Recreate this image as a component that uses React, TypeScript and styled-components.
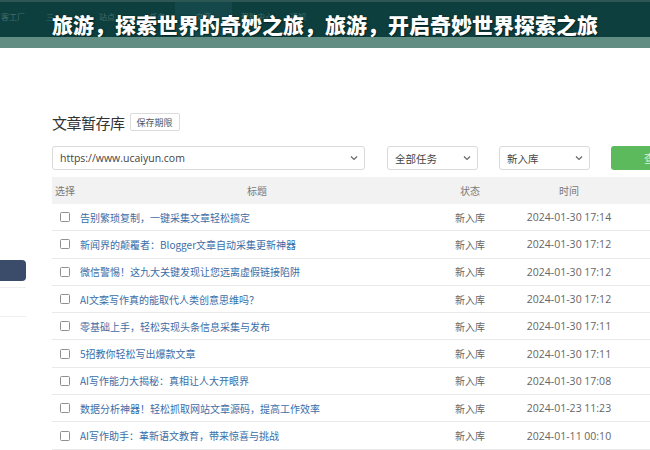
import React from 'react';
import styled, { createGlobalStyle } from 'styled-components';

const GlobalStyle = createGlobalStyle`
  html, body {
    margin: 0;
    padding: 0;
    width: 650px;
    height: 450px;
    overflow: hidden;
    background: #ffffff;
    font-family: "Open Sans", "Noto Sans CJK SC", sans-serif;
  }
`;

const Page = styled.div`
  display: flex;
  flex-direction: column;
  width: 650px;
  height: 450px;
  overflow: hidden;
`;

const TopBar = styled.div`
  position: relative;
  height: 35px;
  border-top: 2px solid #2c5755;
  background: #0e3f3f;
  display: flex;
  align-items: flex-start;
  overflow: hidden;
`;

const Nav = styled.div`
  display: flex;
  height: 100%;
`;

const NavItem = styled.div<{ $active?: boolean; $width: number }>`
  width: ${({ $width }) => $width}px;
  height: 100%;
  box-sizing: border-box;
  padding-top: 9px;
  text-align: center;
  font-family: "Noto Sans CJK SC", sans-serif;
  font-size: 8px;
  line-height: 12px;
  color: #3f6d6b;
  white-space: nowrap;
  background: ${({ $active }) => ($active ? '#14484a' : 'transparent')};
`;

const Headline = styled.h1`
  position: absolute;
  left: 52px;
  top: 10px;
  margin: 0;
  font-family: "Noto Sans CJK SC", sans-serif;
  font-weight: 900;
  font-size: 21px;
  line-height: 24px;
  color: #ffffff;
  text-shadow: 0 0 2px #062626, 1px 1px 1px #062626;
  white-space: nowrap;
`;

const Band = styled.div`
  height: 11px;
  background: #618d83;
`;

const Body = styled.div`
  flex: 1;
  display: flex;
  min-height: 0;
`;

const Sidebar = styled.div`
  width: 52px;
  flex-shrink: 0;
  display: flex;
  flex-direction: column;
  padding-top: 212px;
`;

const SideButton = styled.div`
  width: 26px;
  height: 21px;
  background: #3a4c6a;
  border-radius: 0 4px 4px 0;
`;

const SideLine = styled.div<{ $gap: number }>`
  width: 26px;
  height: 1px;
  margin-top: ${({ $gap }) => $gap}px;
  background: #efefef;
`;

const Main = styled.div`
  flex: 1;
  min-width: 0;
  padding-top: 64px;
  overflow: hidden;
`;

const TitleRow = styled.div`
  display: flex;
  align-items: center;
  gap: 5px;
  height: 20px;
`;

const PageTitle = styled.div`
  font-family: "Noto Sans CJK SC", sans-serif;
  font-size: 15px;
  color: #333333;
  letter-spacing: -0.5px;
`;

const Badge = styled.div`
  height: 16px;
  padding: 0 6px;
  display: flex;
  align-items: center;
  border: 1px solid #dcdcdc;
  border-radius: 2px;
  font-family: "Noto Sans CJK SC", sans-serif;
  font-size: 9px;
  color: #555555;
`;

const FilterRow = styled.div`
  display: flex;
  align-items: center;
  gap: 21px;
  margin-top: 14px;
  width: 700px;
`;

const Field = styled.div<{ $width: number }>`
  width: ${({ $width }) => $width}px;
  height: 24px;
  box-sizing: border-box;
  flex-shrink: 0;
  border: 1px solid #d9d9d9;
  border-radius: 3px;
  display: flex;
  align-items: center;
  justify-content: space-between;
  padding: 0 6px 0 7px;
  font-family: "Open Sans", "Noto Sans CJK SC", sans-serif;
  font-size: 10.5px;
  color: #444444;
`;

const Chevron = () => (
  <svg width="8" height="6" viewBox="0 0 8 6">
    <path d="M1 1.5 L4 4.5 L7 1.5" fill="none" stroke="#666" strokeWidth="1.2" />
  </svg>
);

const GreenButton = styled.div`
  width: 88px;
  height: 24px;
  flex-shrink: 0;
  background: #5cb95c;
  border-radius: 3px;
  display: flex;
  align-items: center;
  justify-content: center;
  font-family: "Noto Sans CJK SC", sans-serif;
  font-size: 11px;
  color: #d8f0d8;
`;

const Table = styled.div`
  margin-top: 7px;
  width: 640px;
`;

const Grid = styled.div<{ $head?: boolean }>`
  display: grid;
  grid-template-columns: 28px 354px 72px 126px 1fr;
  align-items: center;
  height: ${({ $head }) => ($head ? '27px' : '26.3px')};
  background: ${({ $head }) => ($head ? '#f2f2f2' : '#ffffff')};
  border-bottom: ${({ $head }) => ($head ? 'none' : '1px solid #e9e9e9')};
  font-family: "Noto Sans CJK SC", sans-serif;
  font-size: 10px;
`;

const HeadCell = styled.div<{ $left?: boolean }>`
  color: #7a7a7a;
  text-align: ${({ $left }) => ($left ? 'left' : 'center')};
  padding-left: ${({ $left }) => ($left ? '3px' : '0')};
  white-space: nowrap;
`;

const CheckCell = styled.div`
  display: flex;
  padding-left: 8px;
`;

const Box = styled.span`
  width: 8px;
  height: 8px;
  border: 1px solid #8f8f8f;
  border-radius: 1.5px;
`;

const TitleCell = styled.div`
  color: #3a6ea8;
  white-space: nowrap;
  overflow: hidden;
`;

const StatusCell = styled.div`
  color: #666666;
  text-align: center;
`;

const TimeCell = styled.div`
  color: #666666;
  text-align: center;
  font-family: "Open Sans", sans-serif;
  font-size: 10.5px;
`;

const rows = [
  { title: '告别繁琐复制，一键采集文章轻松搞定', time: '2024-01-30 17:14' },
  { title: '新闻界的颠覆者：Blogger文章自动采集更新神器', time: '2024-01-30 17:12' },
  { title: '微信警惕！这九大关键发现让您远离虚假链接陷阱', time: '2024-01-30 17:12' },
  { title: 'AI文案写作真的能取代人类创意思维吗？', time: '2024-01-30 17:12' },
  { title: '零基础上手，轻松实现头条信息采集与发布', time: '2024-01-30 17:11' },
  { title: '5招教你轻松写出爆款文章', time: '2024-01-30 17:11' },
  { title: 'AI写作能力大揭秘：真相让人大开眼界', time: '2024-01-30 17:08' },
  { title: '数据分析神器！轻松抓取网站文章源码，提高工作效率', time: '2024-01-23 11:23' },
  { title: 'AI写作助手：革新语文教育，带来惊喜与挑战', time: '2024-01-11 00:10' },
];

const navItems = [
  { label: '客工厂', width: 26 },
  { label: '三', width: 48 },
  { label: '站点', width: 66 },
  { label: '任务', width: 35 },
  { label: '文章', width: 57, active: true },
  { label: '帮助中心', width: 50 },
  { label: '通知', width: 32 },
];

export default function App() {
  return (
    <Page>
      <GlobalStyle />
      <TopBar>
        <Nav>
          {navItems.map((n) => (
            <NavItem key={n.label} $width={n.width} $active={n.active}>
              {n.label}
            </NavItem>
          ))}
        </Nav>
        <Headline>旅游，探索世界的奇妙之旅，旅游，开启奇妙世界探索之旅</Headline>
      </TopBar>
      <Band />
      <Body>
        <Sidebar>
          <SideButton />
          <SideLine $gap={6} />
          <SideLine $gap={28} />
        </Sidebar>
        <Main>
          <TitleRow>
            <PageTitle>文章暂存库</PageTitle>
            <Badge>保存期限</Badge>
          </TitleRow>
          <FilterRow>
            <Field $width={313}>
              <span>https://www.ucaiyun.com</span>
              <Chevron />
            </Field>
            <Field $width={91} style={{ marginLeft: 1 }}>
              <span>全部任务</span>
              <Chevron />
            </Field>
            <Field $width={91}>
              <span>新入库</span>
              <Chevron />
            </Field>
            <GreenButton>查询</GreenButton>
          </FilterRow>
          <Table>
            <Grid $head>
              <HeadCell $left>选择</HeadCell>
              <HeadCell>标题</HeadCell>
              <HeadCell>状态</HeadCell>
              <HeadCell>时间</HeadCell>
              <HeadCell />
            </Grid>
            {rows.map((r) => (
              <Grid key={r.title}>
                <CheckCell>
                  <Box />
                </CheckCell>
                <TitleCell>{r.title}</TitleCell>
                <StatusCell>新入库</StatusCell>
                <TimeCell>{r.time}</TimeCell>
                <div />
              </Grid>
            ))}
          </Table>
        </Main>
      </Body>
    </Page>
  );
}
